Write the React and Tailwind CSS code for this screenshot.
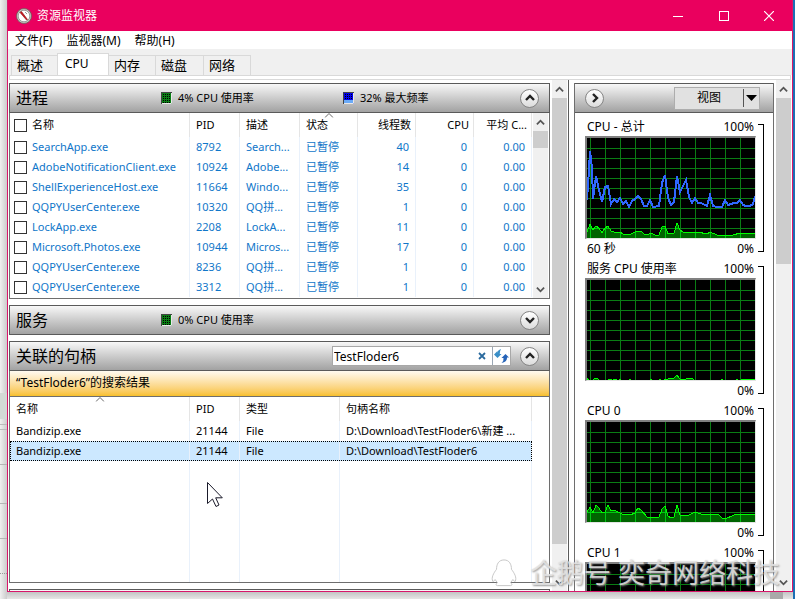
import clsx from 'clsx'

const processes = [
  { name: 'SearchApp.exe', pid: 8792, desc: 'Search...', threads: 40 },
  { name: 'AdobeNotificationClient.exe', pid: 10924, desc: 'Adobe...', threads: 14 },
  { name: 'ShellExperienceHost.exe', pid: 11664, desc: 'Windo...', threads: 35 },
  { name: 'QQPYUserCenter.exe', pid: 10320, desc: 'QQ拼...', threads: 1 },
  { name: 'LockApp.exe', pid: 2208, desc: 'LockA...', threads: 11 },
  { name: 'Microsoft.Photos.exe', pid: 10944, desc: 'Micros...', threads: 17 },
  { name: 'QQPYUserCenter.exe', pid: 8236, desc: 'QQ拼...', threads: 1 },
  { name: 'QQPYUserCenter.exe', pid: 3312, desc: 'QQ拼...', threads: 1 },
]

const handles = [
  { name: 'Bandizip.exe', pid: 21144, type: 'File', path: 'D:\\Download\\TestFloder6\\新建 ...' },
  { name: 'Bandizip.exe', pid: 21144, type: 'File', path: 'D:\\Download\\TestFloder6', selected: true },
]

const charts = [
  {
    id: 'total',
    title: 'CPU - 总计',
    span: '60 秒',
    min: '0%',
    usage: '0,94 3,86 6,92 9,88 12,90 15,95 18,90 21,88 24,93 27,94 33,94 36,96 44,96 48,94 54,93 57,96 60,97 64,95 68,97 72,97 75,89 78,88 81,96 87,95 90,85 93,92 96,94 105,94 108,95 111,94 120,96 123,94 130,97 146,97 153,95 160,96 168,95',
    frequency: '0,62 2,32 3,13 5,30 6,61 9,38 12,52 15,64 18,49 21,48 24,66 27,61 30,64 33,60 36,66 39,63 42,69 45,63 48,61 51,58 54,61 57,68 60,68 63,62 66,69 72,68 75,45 78,37 81,60 84,67 87,64 90,38 93,54 96,48 99,42 102,59 105,65 108,60 111,65 114,65 120,68 123,57 126,68 130,69 135,69 138,62 141,67 147,65 150,65 153,62 156,67 159,68 163,68 166,66 168,58',
  },
  {
    id: 'services',
    title: '服务 CPU 使用率',
    min: '0%',
    usage: '0,98 2,101 6,101 7,99 9,98 11,99 12,101 21,101 22,99 24,99 25,101 27,99 29,99 30,101 32,101 33,99 34,101 42,101 43,99 44,101 63,101 64,99 65,101 72,101 73,99 74,101 81,99 84,98 87,98 90,95 93,99 99,99 102,98 106,99 107,101 134,101 135,99 136,101 149,101 150,99 151,101 158,99 168,99',
  },
  {
    id: 'cpu0',
    title: 'CPU 0',
    min: '0%',
    usage: '0,90 3,85 6,91 9,83 12,86 15,91 18,90 21,83 24,89 27,88 35,92 43,93 48,91 51,86 54,88 60,95 68,96 72,95 75,87 78,84 81,94 84,96 87,95 90,83 93,93 100,94 108,90 117,93 123,92 132,93 135,96 138,97 147,93 153,92 161,93 168,92',
  },
  { id: 'cpu1', title: 'CPU 1', usage: '0,96 168,96' },
]

const panelHeader = 'flex h-[30px] items-center border border-[#5a5a5a] bg-linear-to-b from-[#f8f8f8] to-[#a2a2a2]'

function Chevron({ dir, className }) {
  const paths = {
    up: 'M1 7 5 3l4 4',
    down: 'M1 3l4 4 4-4',
    right: 'M3 1l4 4-4 4',
  }
  return (
    <svg viewBox="0 0 10 10" className={className} fill="none" stroke="currentColor">
      <path d={paths[dir]} />
    </svg>
  )
}

function RoundButton({ dir, label, className }) {
  return (
    <button
      aria-label={label}
      className={clsx(
        'flex size-[19px] items-center justify-center rounded-full border border-[#858585] bg-linear-to-b from-white to-[#dcdcdc] text-[#222]',
        className
      )}
    >
      <Chevron dir={dir} className="size-[10px] stroke-[2.4]" />
    </button>
  )
}

function ScrollBar({ thumb, className }) {
  return (
    <div className={clsx('flex shrink-0 flex-col items-center bg-[#f0f0f0] text-[#555]', className)}>
      <div className="flex h-[18px] shrink-0 items-center">
        <Chevron dir="up" className="size-[9px] stroke-2" />
      </div>
      <div className={clsx('w-full bg-[#cdcdcd]', thumb)} />
      <div className="mt-auto flex h-[17px] shrink-0 items-center">
        <Chevron dir="down" className="size-[9px] stroke-2" />
      </div>
    </div>
  )
}

function Meter({ color, children, className }) {
  const blue = color === 'blue'
  const dots = [2, 4, 6, 8, 10].filter((y) => !blue || y < 8)
  return (
    <div className={clsx('flex items-center gap-1.5 text-[11px]', className)}>
      <svg width="11" height="12">
        <rect width="11" height="12" fill={blue ? '#0000f0' : '#0a7d14'} />
        {dots.map((y) =>
          [2, 4, 6, 8].map((x) => <rect key={`${x}-${y}`} x={x} y={y} width="1" height="1" fill="#000" />)
        )}
        {blue && <rect y="8" width="11" height="3" fill="#6aaaf8" />}
        <path d="M.5 12V.5H11" fill="none" stroke="#444" />
        <path d="M10.5 1v10.5H1" fill="none" stroke="#e8e8e8" />
      </svg>
      <span>{children}</span>
    </div>
  )
}

function SortMark() {
  return (
    <svg width="9" height="5" className="absolute top-0 left-1/2 -translate-x-1/2" fill="none" stroke="#666">
      <path d="M.5 4.500l4-4 4 4" />
    </svg>
  )
}

function Th({ children, right, sorted }) {
  return (
    <th className={clsx('relative h-6 border-r border-[#e5e5e5] px-1.5 font-normal whitespace-nowrap', right ? 'pr-1 text-right' : 'text-left')}>
      {sorted && <SortMark />}
      {children}
    </th>
  )
}

function Td({ children, right }) {
  return (
    <td className={clsx('truncate border-r border-[#e9f1fb] px-1.5', right && 'text-right')}>
      {children}
    </td>
  )
}

function Check({ label }) {
  return (
    <input
      type="checkbox"
      aria-label={label}
      className="mr-[5px] -ml-0.5 size-[13px] shrink-0 appearance-none border border-[#333] bg-white"
    />
  )
}

function ProcessTable() {
  return (
    <div className="flex h-[186px] border border-t-0 border-[#6e6e6e] bg-white text-[11px]">
      <div className="min-w-0 flex-1">
        <table className="w-full table-fixed border-collapse">
          <colgroup>
            <col />
            <col className="w-[50px]" />
            <col className="w-[60px]" />
            <col className="w-[58px]" />
            <col className="w-[58px]" />
            <col className="w-[58px]" />
            <col className="w-[58px]" />
          </colgroup>
          <thead>
            <tr>
              <Th>
                <span className="flex items-center"><Check label="全选" />名称</span>
              </Th>
              <Th>PID</Th>
              <Th>描述</Th>
              <Th sorted>状态</Th>
              <Th right>线程数</Th>
              <Th right>CPU</Th>
              <Th right>平均 C...</Th>
            </tr>
          </thead>
          <tbody className="text-[#0f76c9]">
            {processes.map((p) => (
              <tr key={p.pid} className="h-5">
                <Td>
                  <label className="flex items-center"><Check label={p.name} />{p.name}</label>
                </Td>
                <Td>{p.pid}</Td>
                <Td>{p.desc}</Td>
                <Td>已暂停</Td>
                <Td right>{p.threads}</Td>
                <Td right>0</Td>
                <Td right>0.00</Td>
              </tr>
            ))}
          </tbody>
        </table>
      </div>
      <ScrollBar className="mr-px ml-px w-[15px]" thumb="h-[17px]" />
    </div>
  )
}

function HandleTable() {
  return (
    <div className="flex h-[186px] border border-t-0 border-[#6e6e6e] bg-white pr-[17px] text-[11px]">
      <table className="h-full w-full table-fixed border-collapse">
        <colgroup>
          <col />
          <col className="w-[50px]" />
          <col className="w-[100px]" />
          <col className="w-[192px]" />
        </colgroup>
        <thead>
          <tr className="h-6">
            <Th sorted>名称</Th>
            <Th>PID</Th>
            <Th>类型</Th>
            <Th>句柄名称</Th>
          </tr>
        </thead>
        <tbody>
          {handles.map((h) => (
            <tr
              key={h.path}
              className={clsx('h-5', h.selected && 'bg-[#cce8ff] outline-1 -outline-offset-1 outline-dotted outline-black')}
            >
              <Td>{h.name}</Td>
              <Td>{h.pid}</Td>
              <Td>{h.type}</Td>
              <Td>{h.path}</Td>
            </tr>
          ))}
          <tr>
            <Td /><Td /><Td /><Td />
          </tr>
        </tbody>
      </table>
    </div>
  )
}

function Chart({ id, title, span, min, usage, frequency }) {
  const cols = Array.from({ length: 11 }, (_, i) => `M${3 + i * 15}.5 0v100`).join('')
  const rows = Array.from({ length: 9 }, (_, i) => `M0 ${10 + i * 10}.5h168`).join('')
  const area = `0,100 ${usage} 168,100`
  return (
    <section className="flex h-[142px] shrink-0">
      <div className="min-w-0 flex-1">
        <div className="flex h-[19px] items-center justify-between px-0.5">
          <h3>{title}</h3>
          <span>100%</span>
        </div>
        <div className="h-[103px] border-t-2 border-r border-b border-l-2 border-t-[#808080] border-r-[#e3e3e3] border-b-[#e3e3e3] border-l-[#808080] bg-black">
          <svg viewBox="0 0 168 100" preserveAspectRatio="none" shapeRendering="crispEdges" className="block h-full w-full">
            <clipPath id={`area-${id}`}>
              <polygon points={area} />
            </clipPath>
            <path d={cols + rows} stroke="#0a7d14" />
            <polygon points={area} fill="#006400" />
            <path d={cols + rows} stroke="#00c814" clipPath={`url(#area-${id})`} />
            <polyline points={usage} fill="none" stroke="#00ff00" />
            {frequency && <polyline points={frequency} fill="none" stroke="#3068ff" strokeWidth="2" />}
          </svg>
        </div>
        <div className="flex h-5 items-center justify-between px-0.5">
          <span>{span}</span>
          <span>{min}</span>
        </div>
      </div>
      <div className="mt-[7px] mb-[7px] ml-[2px] w-[6px] border border-l-0 border-black" />
    </section>
  )
}

function TitleBar() {
  return (
    <header className="flex h-[31px] shrink-0 items-center bg-[#ea005e] pl-2 text-white">
      <svg width="16" height="16" viewBox="0 0 16 16" className="mr-[5px]">
        <circle cx="8" cy="8" r="7.500" fill="#c9c5c0" stroke="#6d5a58" strokeWidth=".8" />
        <circle cx="8" cy="8" r="5.800" fill="#fff" stroke="#8d8d8d" strokeWidth=".8" />
        <path d="M4 4.500 5.500 3.500 11.500 11.500 10.500 12Z" fill="#c8141e" stroke="#8c1010" strokeWidth=".6" />
        <path d="M9 4l2 2" stroke="#9a9a9a" />
      </svg>
      <h1 className="mr-auto">资源监视器</h1>
      <button aria-label="最小化" className="flex h-full w-[46px] items-center justify-center">
        <svg width="10" height="10" stroke="#fff"><path d="M0 5.500h10" /></svg>
      </button>
      <button aria-label="最大化" className="flex h-full w-[45px] items-center justify-center">
        <svg width="10" height="10" stroke="#fff" fill="none" shapeRendering="crispEdges"><path d="M.5.5h9v9h-9z" /></svg>
      </button>
      <button aria-label="关闭" className="flex h-full w-[46px] items-center justify-center">
        <svg width="10" height="10" stroke="#fff" strokeWidth="1.200"><path d="M0 0l10 10M10 0 0 10" /></svg>
      </button>
    </header>
  )
}

function Tabs() {
  const tabs = [
    { label: '概述', width: 'w-[47px]' },
    { label: 'CPU', active: true },
    { label: '内存', width: 'w-[47px]' },
    { label: '磁盘', width: 'w-[48px]' },
    { label: '网络', width: 'w-[47px]' },
  ]
  return (
    <div role="tablist" className="flex h-[26px] shrink-0 items-end bg-[#f0f0f0] pl-[3px]">
      {tabs.map((t) => (
        <button
          key={t.label}
          role="tab"
          aria-selected={!!t.active}
          className={clsx(
            'border border-b-0 border-[#d9d9d9] text-left',
            t.active ? '-ml-px h-[22px] w-[52px] bg-white pb-0.5 pl-[7px]' : 'h-5 border-l-0 pb-0.5 pl-[5px] text-[13px] first:border-l',
            t.width
          )}
        >
          {t.label}
        </button>
      ))}
    </div>
  )
}

function SearchBox() {
  return (
    <div className="ml-auto flex h-5 w-[179px] items-center border border-[#a8a8a8] bg-white">
      <input
        type="text"
        aria-label="搜索句柄"
        defaultValue="TestFloder6"
        className="h-full min-w-0 flex-1 bg-transparent px-px outline-none"
      />
      <button aria-label="清除" className="mr-1.5">
        <svg width="8" height="8" stroke="#2a6a9e" strokeWidth="1.800"><path d="M1 1l6 6M7 1 1 7" /></svg>
      </button>
      <button aria-label="刷新" className="flex h-full w-[18px] items-center justify-center border-l border-[#9aa7b5]">
        <svg width="15" height="14" viewBox="0 0 15 14">
          <path d="M0 5.500 3.500 2V4Q3.500 1 7 0 5.800 2 5.800 4.500V5H7.500L3.500 9Z" fill="#3a8fc8" />
          <path d="M15 8.500 11.500 5 7.500 9H9.500Q10 12 7.500 14 13 13 13 9V8.500Z" fill="#2563b8" />
        </svg>
      </button>
    </div>
  )
}

export default function App() {
  return (
    <div className="relative flex h-screen overflow-hidden bg-[#dcdcdc] font-['Noto_Sans','Noto_Sans_CJK_SC',sans-serif] text-[12px] leading-4 text-black">
      <div className="flex w-[7px] shrink-0 flex-col bg-linear-to-r from-[#f0f0f0] to-[#cccccc]">
        <div className="mt-[393px] h-[26px] bg-[#d3dad5]" />
        <div className="mt-[5px] h-[6px] border-y border-[#bbb]" />
        <div className="mt-[34px] border-t border-[#b5b5b5]" />
        <div className="mt-[38px] border-t border-[#b5b5b5]" />
        <div className="mt-[34px] border-t border-[#b5b5b5]" />
        <div className="mt-[34px] border-t border-dotted border-[#999]" />
      </div>

      <div className="flex min-w-0 flex-1 flex-col">
        <div className="flex min-h-0 flex-1 flex-col border border-t-0 border-[#d8176a] bg-white">
          <TitleBar />
          <nav className="flex h-[18px] shrink-0 items-center gap-3.5 pt-0.5 pl-[7px]">
            <button>文件(F)</button>
            <button>监视器(M)</button>
            <button>帮助(H)</button>
          </nav>
          <Tabs />
          <div className="mx-px h-[5px] shrink-0 border border-[#d9d9d9]" />

          <main className="flex min-h-0 flex-1 overflow-hidden">
            <div className="flex min-w-0 flex-1 flex-col gap-1.5 overflow-hidden pt-[3px] pr-0.5 pl-px">
              <section className="shrink-0">
                <div className={panelHeader}>
                  <h2 className="w-[151px] pl-1.5 text-[16px]">进程</h2>
                  <Meter className="w-[182px]">4% CPU 使用率</Meter>
                  <Meter color="blue">32% 最大频率</Meter>
                  <RoundButton dir="up" label="折叠进程" className="mr-[10px] ml-auto" />
                </div>
                <ProcessTable />
              </section>

              <section className="shrink-0">
                <div className={panelHeader}>
                  <h2 className="w-[151px] pl-1.5 text-[16px]">服务</h2>
                  <Meter>0% CPU 使用率</Meter>
                  <RoundButton dir="down" label="展开服务" className="mr-[10px] ml-auto" />
                </div>
              </section>

              <section className="shrink-0">
                <div className={panelHeader}>
                  <h2 className="pl-1.5 text-[16px]">关联的句柄</h2>
                  <SearchBox />
                  <RoundButton dir="up" label="折叠句柄" className="mr-[10px] ml-[9px]" />
                </div>
                <p className="h-[26px] border border-t-0 border-[#6e6e6e] bg-linear-to-b from-[#fffaf0] to-[#f8c028] pl-1.5 leading-6">
                  “TestFloder6”的搜索结果
                </p>
                <HandleTable />
              </section>

              <div className={clsx(panelHeader, 'shrink-0')} />
            </div>
            <ScrollBar className="w-[15px]" thumb="h-[446px]" />

            <aside className="ml-px flex shrink-0 border-l border-[#5a5a5a] pt-[3px] pr-0.5 pl-[5px]">
              <div className="flex w-[200px] flex-col overflow-hidden border-x border-[#6e6e6e]">
                <div className={clsx(panelHeader, '-mx-px shrink-0 pl-[10px]')}>
                  <RoundButton dir="right" label="隐藏图表" />
                  <button className="mr-[13px] ml-auto flex h-[23px] w-[86px] items-center border border-[#adadad] bg-[#e1e1e1]">
                    <span className="flex-1 text-center">视图</span>
                    <span className="flex h-[18px] w-[16px] items-center justify-center border-l border-[#555]">
                      <svg width="11" height="6"><path d="M0 0h11L5.500 6z" /></svg>
                    </span>
                  </button>
                </div>
                <div className="flex min-h-0 flex-1 flex-col overflow-hidden pt-1 pr-[9px] pl-[10px]">
                  {charts.map((c) => (
                    <Chart key={c.id} {...c} />
                  ))}
                </div>
              </div>
            </aside>
            <ScrollBar className="mr-px w-[15px]" thumb="h-[166px]" />
          </main>
        </div>

        <div className="flex h-[7px] shrink-0 justify-end bg-linear-to-b from-[#c4c4c4] to-[#e6e6e6] pr-[10px]">
          <div className="w-[13px] bg-[#a9a9a9]" />
        </div>
      </div>
      <div className="w-0.5 shrink-0 bg-[#1c6fb5]" />

      {/* mouse pointer */}
      <svg width="17" height="27" viewBox="0 0 17 27" className="absolute top-[482px] left-[207px]">
        <path d="M.5.5v21l5-4.500 3.500 7.500 3-1.500-3.300-7.200h6.600Z" fill="#fff" stroke="#1a1a2a" />
      </svg>

      {/* watermark */}
      <div className="absolute right-[15px] bottom-[10px] flex items-center gap-3 text-[27px] leading-8 text-[#e4e4e4]/85 [text-shadow:1px_1px_2px_#999]">
        <svg width="28" height="30" viewBox="0 0 30 30" fill="#fff" stroke="#c4c4c4" strokeLinejoin="round">
          <path d="M15 1C9 1 7 6 7 11 4 15 1 20 3 24c1 0 2-1 2.500-2L8 25.500c-2 1-2 3 0 3h14c2 0 2-2 0-3l2.500-3.500c.5 1 1.500 2 2.500 2 2-4-1-9-4-13 0-5-2-10-8-10Z" />
        </svg>
        <span>企鹅号 奕奇网络科技</span>
      </div>
    </div>
  )
}
